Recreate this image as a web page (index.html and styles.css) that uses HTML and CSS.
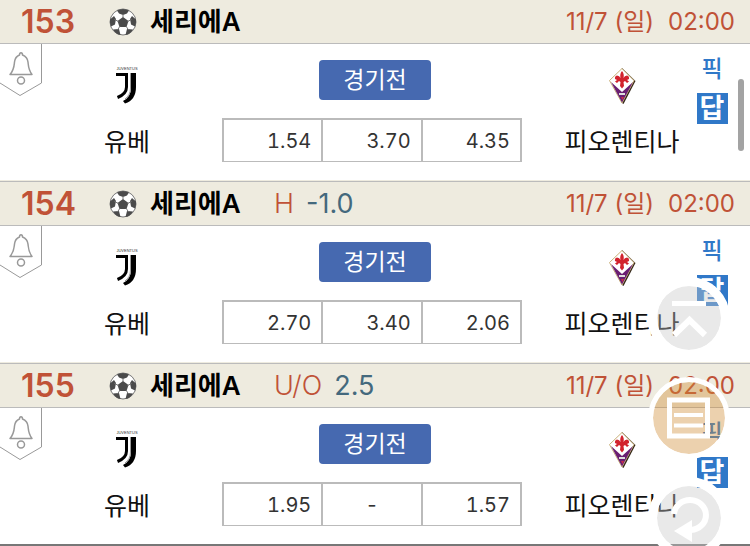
FILE: index.html
```
<!DOCTYPE html>
<html lang="ko">
<head>
    <meta charset="UTF-8">
    <meta name="viewport" content="width=device-width, initial-scale=1.0">
    <title>세리에A</title>
    <link rel="stylesheet" href="styles.css">
</head>
<body>

    <!-- Shared icons -->
    <svg class="icon-defs" aria-hidden="true">
        <symbol id="ball" viewBox="0 0 28 28">
            <circle cx="14" cy="14" r="13" fill="#fff" stroke="#777" stroke-width="1"/>
            <g fill="#4b4b4b">
                <path d="M14 9l5.500 4-2 6h-7l-2-6z"/>
                <path d="M8 2.500q6-3 12 0l-2 3-4 1.500-4-1.500z"/>
                <path d="M1 11.500l4-3.500 2 3-1 5.500-4 2q-1.500-3-1-7z"/>
                <path d="M27 11.500l-4-3.500-2 3 1 5.500 4 2q1.500-3 1-7z"/>
                <path d="M4 21.500l6-.5 1.500 6q-4.500-.5-7.500-5.500z"/>
                <path d="M24 21.500l-6-.5-1.500 6q4.500-.5 7.500-5.500z"/>
            </g>
            <path d="M14 10V6M18.500 13.500l4-2M17 18l2.500 4M11 18l-2.500 4M9.500 13.500l-4-2" stroke="#777" stroke-width="1" fill="none"/>
        </symbol>
        <symbol id="bell" viewBox="0 0 42 53">
            <path d="M41.500 0V39L20 51.500 0 39" fill="#fff" stroke="#999" stroke-width="1"/>
            <path d="M10 30.500C14 26 14 23 14.500 18C15 13.500 17 12 19.500 11C19.500 8 22.500 8 22.500 11C25 12 27.500 13.500 28 18C28.500 23 28.500 26 32 30.500Z" fill="none" stroke="#999" stroke-width="1.500" stroke-linejoin="round"/>
            <circle cx="21" cy="36.500" r="3.500" fill="none" stroke="#999" stroke-width="1.500"/>
        </symbol>
        <symbol id="juve" viewBox="0 0 24 40">
            <text x="12" y="5" text-anchor="middle" font-family="Liberation Sans" font-size="4" fill="#333">JUVENTUS</text>
            <path d="M1 9.500H11.500V22Q11.500 29 2.500 32.500" fill="none" stroke="#000" stroke-width="3"/>
            <path d="M16 8H21V22Q21 35 10 38.500L8 36Q16 32 16 23Z" fill="#000"/>
            <path d="M15.500 8V23Q15.500 30 10 34" fill="none" stroke="#999" stroke-width="1"/>
        </symbol>
        <symbol id="viola" viewBox="0 0 28 38">
            <path d="M14 1L27.500 14 15.500 37 14 36Z" fill="#332619"/>
            <path d="M14 1.500L26 13.500 14 36 1.500 13.500Z" fill="#fff" stroke="#c9b078" stroke-width="1"/>
            <path d="M3 15L14 25 25 15 14 35.500Z" fill="#6a1e72"/>
            <path d="M14 4q2.500 3 1.500 7 1-2.500 3.500-2.500 2.500.5 2 3.500l-2 1 2 1.500-2 1.500-2-2-1.500 1 .5 4-2 2.500-2-2.500.5-4-1.500-1-2 2-2-1.500 2-1.500-2-1q-.5-3 2-3.500 2.500 0 3.500 2.500-1-4 1.500-7z" fill="#d2232d"/>
            <path d="M11 26h6v2h-6z" fill="#ddd"/>
            <path d="M13 30h3l-1.500 3z" fill="#c92d48"/>
        </symbol>
    </svg>

    <main class="match-list">
        <section class="match">
            <header class="match-header">
                <span class="match-no">153</span>
                <svg class="ball"><use href="#ball"/></svg>
                <span class="league">세리에A</span>
                <span class="match-date">11/7 (일)</span>
                <span class="match-time">02:00</span>
            </header>
            <div class="match-body">
                <button class="alarm" aria-label="알림"><svg><use href="#bell"/></svg></button>
                <div class="team home">
                    <svg class="juve"><use href="#juve"/></svg>
                    <span>유베</span>
                </div>
                <div class="center">
                    <button class="status">경기전</button>
                    <table class="odds"><tr><td>1.54</td><td>3.70</td><td>4.35</td></tr></table>
                </div>
                <div class="team">
                    <svg class="viola"><use href="#viola"/></svg>
                    <span>피오렌티나</span>
                </div>
                <div class="links">
                    <a class="pick" href="#">픽</a>
                    <a class="answer" href="#">답</a>
                </div>
            </div>
        </section>

        <section class="match">
            <header class="match-header">
                <span class="match-no">154</span>
                <svg class="ball"><use href="#ball"/></svg>
                <span class="league">세리에A</span>
                <span class="bet-type">H</span>
                <span class="bet-value">-1.0</span>
                <span class="match-date">11/7 (일)</span>
                <span class="match-time">02:00</span>
            </header>
            <div class="match-body">
                <button class="alarm" aria-label="알림"><svg><use href="#bell"/></svg></button>
                <div class="team home">
                    <svg class="juve"><use href="#juve"/></svg>
                    <span>유베</span>
                </div>
                <div class="center">
                    <button class="status">경기전</button>
                    <table class="odds"><tr><td>2.70</td><td>3.40</td><td>2.06</td></tr></table>
                </div>
                <div class="team">
                    <svg class="viola"><use href="#viola"/></svg>
                    <span>피오렌티나</span>
                </div>
                <div class="links">
                    <a class="pick" href="#">픽</a>
                    <a class="answer" href="#">답</a>
                </div>
            </div>
        </section>

        <section class="match">
            <header class="match-header">
                <span class="match-no">155</span>
                <svg class="ball"><use href="#ball"/></svg>
                <span class="league">세리에A</span>
                <span class="bet-type">U/O</span>
                <span class="bet-value">2.5</span>
                <span class="match-date">11/7 (일)</span>
                <span class="match-time">02:00</span>
            </header>
            <div class="match-body">
                <button class="alarm" aria-label="알림"><svg><use href="#bell"/></svg></button>
                <div class="team home">
                    <svg class="juve"><use href="#juve"/></svg>
                    <span>유베</span>
                </div>
                <div class="center">
                    <button class="status">경기전</button>
                    <table class="odds"><tr><td>1.95</td><td class="none">-</td><td>1.57</td></tr></table>
                </div>
                <div class="team">
                    <svg class="viola"><use href="#viola"/></svg>
                    <span>피오렌티나</span>
                </div>
                <div class="links">
                    <a class="pick" href="#">픽</a>
                    <a class="answer" href="#">답</a>
                </div>
            </div>
        </section>
    </main>

    <!-- Floating buttons -->
    <nav class="floating">
        <button class="fab" aria-label="맨 위로">
            <svg viewBox="0 0 64 64"><path d="M15 17.500H49" stroke="#fff" stroke-width="5"/><path d="M17 49L32.500 34 48 49" fill="none" stroke="#fff" stroke-width="6"/></svg>
        </button>
        <button class="fab list" aria-label="목록">
            <svg viewBox="0 0 72 72"><path d="M16.500 18H54.500V54H16.500Z" fill="none" stroke="#fff" stroke-width="5"/><path d="M21 33H50M21 43.500H50" stroke="#fff" stroke-width="4"/></svg>
        </button>
        <button class="fab" aria-label="새로고침">
            <svg viewBox="0 0 64 64"><path d="M17 28A16 15 0 1 1 34 44" fill="none" stroke="#fff" stroke-width="6"/><path d="M17 45L35 34V56Z" fill="#fff"/></svg>
        </button>
    </nav>
    <div class="scroll-thumb"></div>

</body>
</html>
```
FILE: styles.css
```
/* General Page Styles */
* {
    box-sizing: border-box;
}

body {
    font-family: Inter, "Noto Sans CJK KR", sans-serif;
    background-color: #fff;
    color: #111;
    margin: 0;
}

button {
    font-family: inherit;
    border: none;
    padding: 0;
    cursor: pointer;
}

a {
    text-decoration: none;
}

svg {
    display: block;
}

.icon-defs {
    display: none;
}

/* Match Header */
.match {
    border-bottom: 1px solid #bbb;
    box-shadow: inset 0 -1px #eeebdf;
    padding-bottom: 1px;
}

.match:last-child {
    border-bottom: 2px solid #777;
    box-shadow: none;
    padding-bottom: 0;
}

.match-header {
    display: flex;
    align-items: center;
    height: 44px;
    padding: 0 15px 0 21px;
    background-color: #eeebdf;
    border-bottom: 1px solid #bbb;
    color: #c05237;
    font-size: 24px;
    line-height: 42px;
    white-space: nowrap;
}

.match-no {
    width: 88px;
    font-size: 32px;
    font-weight: 600;
}

.ball {
    width: 28px;
    height: 28px;
}

.league {
    width: 124px;
    margin-left: 13px;
    color: #000;
    font-size: 26px;
    font-weight: 600;
}

.bet-type {
    margin-right: 12px;
    font-size: 27px;
    font-weight: 300;
}

.bet-value {
    color: #44697d;
    font-size: 27px;
    font-weight: 400;
}

.match-date {
    margin-left: auto;
}

.match-time {
    margin-left: 14px;
}

/* Match Body */
.match-body {
    position: relative;
    display: grid;
    grid-template-columns: 222fr 328fr 144fr 56fr;
    min-height: 136px;
    padding: 16px 0 18px;
}

.alarm {
    position: absolute;
    top: 0;
    left: 0;
    background: none;
}

.alarm svg {
    width: 42px;
    height: 53px;
}

.team {
    display: flex;
    flex-direction: column;
    align-items: center;
    justify-content: space-between;
    font-size: 25px;
    line-height: 40px;
    white-space: nowrap;
}

.home {
    padding-left: 32px;
}

.juve {
    width: 24px;
    height: 40px;
    margin-top: 5px;
}

.viola {
    width: 28px;
    height: 38px;
    margin-top: 7px;
}

.center {
    display: flex;
    flex-direction: column;
    align-items: center;
    justify-content: space-between;
    padding-right: 28px;
}

.status {
    width: 112px;
    height: 40px;
    margin-left: 6px;
    border-radius: 4px;
    background-color: #4669b0;
    color: #fff;
    font-size: 23px;
    line-height: 40px;
}

.odds {
    width: 100%;
    height: 44px;
    table-layout: fixed;
    border-collapse: collapse;
}

.odds td {
    padding: 0 10px 0 0;
    border: 2px solid #bbb;
    border-bottom-width: 1px;
    color: #333;
    font-size: 20px;
    font-variant-numeric: tabular-nums;
    font-optical-sizing: none;
    text-align: right;
}

.odds .none {
    padding: 0;
    text-align: center;
}

.links {
    display: flex;
    flex-direction: column;
    align-items: center;
    gap: 15px;
    padding-right: 20px;
}

.pick {
    color: #3078c8;
    font-size: 23px;
    font-weight: 500;
    line-height: 18px;
}

.answer {
    width: 31px;
    height: 31px;
    background-color: #3078c8;
    color: #fff;
    font-size: 27px;
    font-weight: 700;
    line-height: 32px;
    text-align: center;
}

/* Floating Buttons */
.floating {
    position: fixed;
    right: 20px;
    bottom: -13px;
    display: flex;
    flex-direction: column;
    align-items: center;
    gap: 18px;
}

.fab {
    width: 82px;
    height: 82px;
    border: 9px solid #fff;
    border-radius: 50%;
    background: rgba(200, 200, 200, 0.4) padding-box;
}

.fab.list {
    border-width: 5px;
    background-color: rgba(207, 140, 52, 0.4);
}

.scroll-thumb {
    position: fixed;
    top: 79px;
    right: 6px;
    width: 6px;
    height: 72px;
    border-radius: 3px;
    background-color: #a3a3a3;
}
```
